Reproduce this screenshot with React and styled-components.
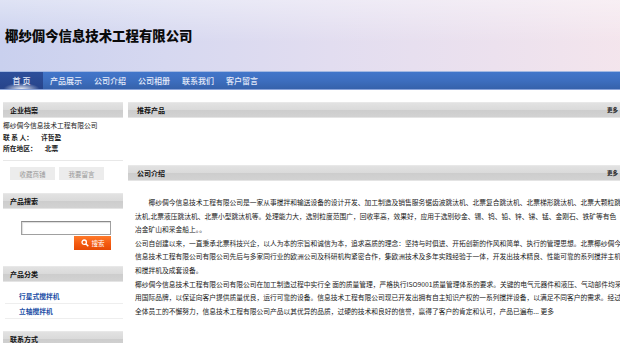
import React from 'react';
import styled, { createGlobalStyle } from 'styled-components';

const GlobalStyle = createGlobalStyle`
  html, body {
    margin: 0;
    padding: 0;
    background: #fff;
    overflow: hidden;
  }
  body {
    font-family: "Noto Sans CJK SC", "Liberation Sans", sans-serif;
    color: #222;
  }
  a {
    text-decoration: none;
  }
`;

const navItems = ['产品展示', '公司介绍', '公司相册', '联系我们', '客户留言'];
const categories = ['行星式搅拌机', '立轴搅拌机'];

export default function App() {
  return (
    <Page>
      <GlobalStyle />
      <Header>
        <Title>椰纱倜今信息技术工程有限公司</Title>
      </Header>
      <Nav>
        <NavItem active>首 页</NavItem>
        {navItems.map((item) => (
          <NavItem key={item}>{item}</NavItem>
        ))}
      </Nav>

      <Body>
        <Sidebar>
          <BoxHead>企业档案</BoxHead>
          <InfoList>
            <InfoLine>椰纱倜今信息技术工程有限公司</InfoLine>
            <InfoLine strong>
              联 系 人：<Value>许哲盈</Value>
            </InfoLine>
            <InfoLine strong>
              所在地区：<Value>北票</Value>
            </InfoLine>
          </InfoList>
          <ButtonRow>
            <GrayButton>收藏商铺</GrayButton>
            <GrayButton>我要留言</GrayButton>
          </ButtonRow>

          <BoxHead top={13}>产品搜索</BoxHead>
          <SearchForm>
            <SearchInput type="text" />
            <SearchButton>
              <svg width="8" height="8" viewBox="0 0 8 8">
                <circle cx="3.2" cy="3.2" r="2.2" fill="none" stroke="#fff" strokeWidth="1.3" />
                <line x1="4.8" y1="4.8" x2="7.3" y2="7.3" stroke="#fff" strokeWidth="1.5" />
              </svg>
              搜索
            </SearchButton>
          </SearchForm>

          <BoxHead top={16}>产品分类</BoxHead>
          <CatList>
            {categories.map((c) => (
              <CatItem key={c}>
                <CatLink href="#">{c}</CatLink>
              </CatItem>
            ))}
          </CatList>

          <BoxHead top={12}>联系方式</BoxHead>
        </Sidebar>

        <Main>
          <MainHead>
            <span>推荐产品</span>
            <More>更多</More>
          </MainHead>
          <ProductArea />
          <MainHead>
            <span>公司介绍</span>
            <More>更多</More>
          </MainHead>
          <Intro>
            <Para indent>
              椰纱倜今信息技术工程有限公司是一家从事搅拌和输送设备的设计开发、加工制造及销售服务锯齿波跳汰机、北票复合跳汰机、北票梯形跳汰机、北票大颗粒跳汰机,北票液压跳汰机、北票小型跳汰机等。处理能力大，选别粒度范围广，回收率高，效果好，应用于选别砂金、锡、钨、铅、锌、锑、锰、金刚石、铁矿等有色冶金矿山和采金船上。。
            </Para>
            <Para>
              公司自创建以来，一直秉承北票科技兴企，以人为本的宗旨和诚信为本，追求高质的理念：坚持与时俱进、开拓创新的作风和简单、执行的管理思想。北票椰纱倜今信息技术工程有限公司有限公司先后与多家同行业的欧洲公司及科研机构紧密合作，集欧洲技术及多年实践经验于一体，开发出技术精良、性能可靠的系列搅拌主机和搅拌机及成套设备。
            </Para>
            <Para>
              椰纱倜今信息技术工程有限公司有限公司在加工制造过程中实行全 面的质量管理，严格执行ISO9001质量管理体系的要求。关键的电气元器件和液压、气动部件均采用国际品牌，以保证向客户提供质量优良，运行可靠的设备。信息技术工程有限公司现已开发出拥有自主知识产权的一系列搅拌设备，以满足不同客户的需求。经过全体员工的不懈努力，信息技术工程有限公司产品以其优异的品质，过硬的技术和良好的信誉，赢得了客户的肯定和认可，产品已遍布...{' '}
              <MoreLink href="#">更多</MoreLink>
            </Para>
          </Intro>
        </Main>
      </Body>
    </Page>
  );
}

// Styles

const Page = styled.div`
  width: 660px;
`;

const Header = styled.div`
  height: 71px;
  display: flex;
  align-items: center;
  padding-left: 5px;
  padding-top: 1px;
  box-sizing: border-box;
  background:
    linear-gradient(180deg, rgba(255, 255, 255, 0.4) 0%, rgba(255, 255, 255, 0) 60%),
    linear-gradient(90deg, #c9d0ee 0%, #d6d8f0 25%, #e2ddf0 50%, #ece1ee 75%, #f6e6ec 100%);
`;

const Title = styled.h1`
  margin: 0;
  font-size: 13.4px;
  font-weight: 900;
  color: #0a0a0a;
  line-height: 1;
`;

const Nav = styled.div`
  height: 19px;
  display: flex;
  background: linear-gradient(180deg, #4276ca 0%, #3d6ebf 50%, #3662ab 100%);
  border-top: 1px solid #a3b8e2;
  border-bottom: 1px solid #8ca5da;
  box-sizing: border-box;
`;

const NavItem = styled.a`
  display: flex;
  align-items: center;
  justify-content: center;
  font-size: 8px;
  font-weight: 500;
  color: #e6ecfa;
  white-space: pre;
  width: ${(p) => (p.active ? '43px' : '44px')};
  margin-right: ${(p) => (p.active ? '1px' : '0')};
  background: ${(p) =>
    p.active
      ? 'radial-gradient(ellipse 18px 6px at 50% 100%, rgba(255,255,255,0.9), rgba(255,255,255,0) 100%), linear-gradient(180deg, #2d4f9b, #27448a)'
      : 'transparent'};
`;

const Body = styled.div`
  display: flex;
  align-items: flex-start;
  gap: 5px;
  padding: 12px 0 0 3px;
`;

const Sidebar = styled.div`
  width: 120px;
  flex-shrink: 0;
  display: flex;
  flex-direction: column;
`;

const BoxHead = styled.div`
  height: 16px;
  margin-top: ${(p) => p.top || 0}px;
  display: flex;
  align-items: center;
  justify-content: space-between;
  padding: 0 7px;
  box-sizing: border-box;
  font-size: 7px;
  font-weight: 700;
  color: #111;
  background: linear-gradient(180deg, #e2e2e2 0%, #dadada 48%, #cdcdcd 52%, #d2d2d2 100%);
  border-top: 1px solid #e8e8e8;
  border-bottom: 1px solid #e4e4e4;
`;

const MainHead = styled(BoxHead)`
  padding: 0 10px 0 9px;
`;

const More = styled.span`
  font-size: 5.5px;
  font-weight: 700;
  color: #222;
`;

const InfoList = styled.div`
  padding: 2px 0 5px;
  border-bottom: 1px solid #e8e8e8;
`;

const InfoLine = styled.div`
  font-size: 6.75px;
  line-height: 11.7px;
  height: 11.7px;
  color: #222;
  font-weight: ${(p) => (p.strong ? 700 : 400)};
  white-space: pre;
`;

const Value = styled.span`
  margin-left: 8px;
`;

const ButtonRow = styled.div`
  display: flex;
  gap: 4px;
  padding: 6px 0 0 7px;
`;

const GrayButton = styled.div`
  width: 45px;
  height: 13px;
  display: flex;
  align-items: center;
  justify-content: center;
  font-size: 6.5px;
  color: #9a9a9a;
  background: #ececec;
`;

const SearchForm = styled.div`
  display: flex;
  flex-direction: column;
  align-items: flex-end;
  width: 108px;
  padding-top: 12px;
  gap: 1px;
`;

const SearchInput = styled.input`
  width: 90px;
  height: 14px;
  box-sizing: border-box;
  margin: 0;
  padding: 0;
  border: 1px solid #a0a0a0;
  border-top-color: #8a8a8a;
  box-shadow: inset 1px 1px 1px #ddd;
  outline: none;
`;

const SearchButton = styled.div`
  width: 37px;
  height: 14px;
  display: flex;
  align-items: center;
  justify-content: center;
  gap: 3px;
  font-size: 6.5px;
  color: #fff;
  background: linear-gradient(180deg, #ff7a2a 0%, #f45a10 55%, #e64a05 100%);
`;

const CatList = styled.ul`
  list-style: none;
  margin: 0;
  padding: 7px 0 0 2px;
`;

const CatItem = styled.li`
  height: 15px;
  display: flex;
  align-items: center;
  padding-left: 14px;
  border-bottom: 1px solid #eeeeee;
  box-sizing: border-box;
`;

const CatLink = styled.a`
  font-size: 6.75px;
  font-weight: 700;
  color: #1d4fa6;
`;

const Main = styled.div`
  width: 500px;
  flex-shrink: 0;
  display: flex;
  flex-direction: column;
`;

const ProductArea = styled.div`
  height: 47px;
`;

const Intro = styled.div`
  padding: 15px 6px 0 7px;
`;

const Para = styled.p`
  margin: 0;
  font-size: 6.75px;
  line-height: 13.6px;
  color: #1a1a1a;
  text-indent: ${(p) => (p.indent ? '2em' : '0')};
  word-break: break-all;
`;

const MoreLink = styled.a`
  color: #1a1a1a;
`;
